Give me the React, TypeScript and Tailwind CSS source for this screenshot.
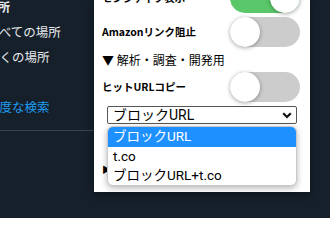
import React from "react";

const cjk = { fontFamily: "'Noto Sans CJK JP', 'Noto Sans', sans-serif" };
const roboto = { fontFamily: "Roboto, 'Noto Sans CJK JP', sans-serif" };

const Toggle = ({ on }: { on: boolean }) => (
  <div
    className={`relative h-[30px] w-[70px] shrink-0 rounded-full ${on ? "bg-[#5ac86a]" : "bg-[#cccccc]"}`}
  >
    <div
      className={`absolute top-0 h-[30px] w-[30px] rounded-full bg-white shadow-[0_1px_4px_rgba(0,0,0,0.35)] ${
        on ? "right-0" : "left-0"
      }`}
    />
  </div>
);

const Row = ({ label, on }: { label: string; on: boolean }) => (
  <div className="flex h-[30px] items-center justify-between">
    <span className="text-[10.5px] font-bold leading-none text-black">{label}</span>
    <Toggle on={on} />
  </div>
);

export default function App() {
  return (
    <div className="relative flex h-[218px] w-[330px] overflow-hidden bg-[#15202b]" style={cjk}>
      <div className="w-[94px] shrink-0 overflow-hidden">
        <div className="-ml-[15px] text-[12.5px] whitespace-nowrap text-[#e7e9ea]">
          <div className="-mt-[5px] flex h-[25px] items-center font-bold">場所</div>
          <div className="ml-[2px] flex h-[25px] items-center">すべての場所</div>
          <div className="ml-[2px] flex h-[25px] items-center">近くの場所</div>
          <div className="ml-[2px] mt-[25px] flex h-[25px] items-center text-[#1d9bf0]">高度な検索</div>
        </div>
        <div className="mt-[10px] h-px w-full bg-[#38444d]" />
      </div>

      <div className="relative h-[192px] w-[216px] shrink-0 overflow-visible bg-white shadow-[0_2px_8px_rgba(0,0,0,0.4)]">
        <div className="h-full overflow-hidden pl-[8px] pr-[10px]">
          <div className="-mt-[17px] flex flex-col gap-[4px]">
            <Row label="センシティブ表示" on={true} />
            <Row label="Amazonリンク阻止" on={false} />
          </div>
          <div className="flex h-[25px] items-center text-[12px] leading-none text-black">▼ 解析・調査・開発用</div>
          <Row label="ヒットURLコピー" on={false} />
          <div
            className="ml-[5px] mt-[4px] flex h-[18px] w-[190px] items-center justify-between rounded-[2px] border border-[#555] pl-[5px] pr-[4px] text-[14px] leading-none text-black"
            style={roboto}
          >
            <span>ブロックURL</span>
            <svg width="10" height="7" viewBox="0 0 10 7">
              <path d="M1.2 1.2 L5 5 L8.8 1.2" fill="none" stroke="#111" strokeWidth="2.2" />
            </svg>
          </div>
          <div className="mt-[41px] text-[9px] leading-none text-black">▶ 詳細</div>
        </div>

        <div
          className="absolute left-[13px] top-[126px] w-[190px] overflow-hidden rounded-[6px] border border-[#c8c8c8] bg-white text-[13.5px] leading-none text-black shadow-[0_2px_6px_rgba(0,0,0,0.3)]"
          style={roboto}
        >
          <div className="flex h-[20px] items-center bg-[#1e90ff] pl-[5px] text-white">ブロックURL</div>
          <div className="flex h-[19px] items-center pl-[5px]">t.co</div>
          <div className="flex h-[19px] items-center pl-[5px]">ブロックURL+t.co</div>
        </div>
      </div>
    </div>
  );
}
